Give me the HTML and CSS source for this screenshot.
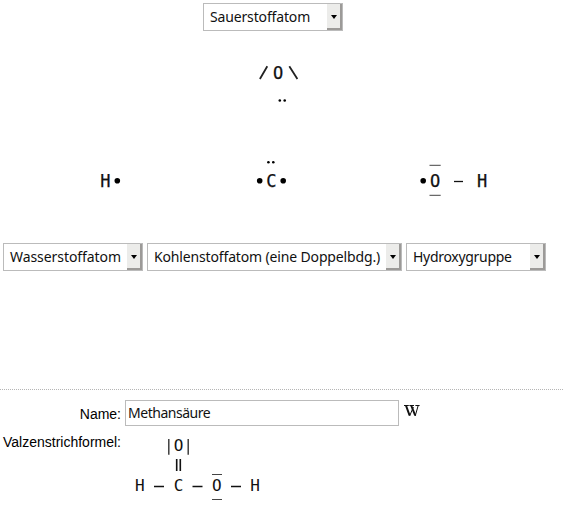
FILE: index.html
```
<!DOCTYPE html>
<html lang="de">
<head>
<meta charset="utf-8">
<title>Valenzstrichformel</title>
<link rel="stylesheet" href="styles.css">
</head>
<body>
<main class="builder">
  <div class="row-top"><div class="select oxygen"><span class="label">Sauerstoffatom</span><span class="arrow"></span></div></div>
  <svg class="atoms" width="563" height="212" viewBox="0 31 563 212">
    <g class="glyphs">
      <path class="stroke" d="M267.3 66.3L259.9 79M289.3 66.3L297.4 79"/>
      <text x="278" y="79">O</text>
      <text x="105.3" y="187">H</text>
      <text x="271.3" y="187">C</text>
      <text x="435" y="187">O</text>
      <text x="482" y="187">H</text>
    </g>
    <g class="dots">
      <circle cx="279.8" cy="100.5" r="1.3"/><circle cx="284.7" cy="100.5" r="1.3"/>
      <circle cx="268.4" cy="162.3" r="1.3"/><circle cx="273.3" cy="162.3" r="1.3"/>
      <circle cx="117.3" cy="180.7" r="2.8"/><circle cx="259.7" cy="180.7" r="2.8"/>
      <circle cx="283.2" cy="180.7" r="2.8"/><circle cx="423.2" cy="180.7" r="2.8"/>
    </g>
    <path class="pairs" d="M429.5 165.3H440.7M429.5 195.3H440.7"/>
    <path class="bond" d="M454 181.5H463"/>
  </svg>
  <div class="row">
    <div class="select hydrogen"><span class="label">Wasserstoffatom</span><span class="arrow"></span></div>
    <div class="select carbon"><span class="label">Kohlenstoffatom (eine Doppelbdg.)</span><span class="arrow"></span></div>
    <div class="select hydroxy"><span class="label">Hydroxygruppe</span><span class="arrow"></span></div>
  </div>
</main>
<section class="result">
  <div class="name-label">Name:</div>
  <div class="name-value">
    <div class="input">Methansäure</div>
    <svg class="wiki" width="16" height="14" viewBox="0 0 16 14">
      <path class="serif" d="M0 1.5H4.8M5.4 1.5H10M11.4 1.5H15.6"/>
      <path class="thick" d="M2 1.5L5.6 11.5M7.2 1.5L11.2 11.5"/>
      <path class="thin" d="M5.6 12L9.4 3M11.2 12L14.2 1.5"/>
    </svg>
  </div>
  <div class="formula-label">Valzenstrichformel:</div>
  <svg class="formula" width="160" height="76" viewBox="125 432 160 76">
    <g class="glyphs">
      <text x="178.5" y="451">O</text>
      <text x="139.8" y="491">H</text>
      <text x="178.5" y="491">C</text>
      <text x="216.8" y="491">O</text>
      <text x="255" y="491">H</text>
    </g>
    <path class="bars" d="M168.8 439V454.7M188.2 439V454.7"/>
    <path class="pairs" d="M212 474.5H222M212 499.5H222"/>
    <path class="double" d="M176.7 459V471M180.3 459V471"/>
    <path class="bond" d="M154 486.5H164M192.5 486.5H202.5M231 486.5H241"/>
  </svg>
</section>
</body>
</html>
```
FILE: styles.css
```
body {
  margin: 0;
  width: 563px;
  height: 517px;
  overflow: hidden;
  background: #fff;
  color: #111;
  font-family: "Noto Sans", sans-serif;
}
.builder {
  box-sizing: border-box;
  height: 389px;
  padding-top: 3px;
}
.row-top { padding-left: 203px; }
.row { display: flex; gap: 4px; padding-left: 3px; }
.select {
  box-sizing: border-box;
  display: flex;
  justify-content: space-between;
  height: 28px;
  border: 1px solid #bbb;
  padding-left: 6px;
  font-size: 14px;
  line-height: 26px;
  letter-spacing: -0.15px;
  white-space: nowrap;
}
.oxygen, .hydrogen, .hydroxy { width: 140px; }
.hydrogen { letter-spacing: -0.07px; }
.hydroxy { letter-spacing: -0.3px; }
.carbon { width: 255px; }
.arrow {
  box-sizing: border-box;
  display: flex;
  flex: none;
  align-items: center;
  justify-content: center;
  width: 15px;
  height: 26px;
  background: #ececea;
  border-right: 2px solid #9c9a98;
  border-bottom: 2px solid #9c9a98;
}
.arrow::after {
  content: "";
  margin-top: 2px;
  margin-left: 1px;
  border: 3.5px solid transparent;
  border-width: 4px 3.5px 0;
  border-top-color: #000;
}
.atoms, .formula { display: block; }
.glyphs {
  font: 16px "DejaVu Sans Mono", monospace;
  text-anchor: middle;
  fill: #111;
}
.atoms .glyphs { font-size: 17px; }
.atoms text { stroke: #111; stroke-width: 0.25; }
.stroke { stroke: #222; stroke-width: 1.8; fill: none; }
.pairs { stroke: #444; stroke-width: 1; fill: none; }
.bars { stroke: #333; stroke-width: 1.4; fill: none; }
.double { stroke: #111; stroke-width: 1.6; fill: none; }
.bond { stroke: #111; stroke-width: 1.3; fill: none; }
.result {
  display: grid;
  grid-template-columns: 121px 1fr;
  grid-template-rows: 26px 76px;
  column-gap: 4px;
  row-gap: 6px;
  box-sizing: border-box;
  height: 128px;
  padding-top: 10px;
  border-top: 1px dotted #b5b5b5;
}
.name-label, .formula-label {
  font: 14px/18px "Liberation Sans", sans-serif;
  text-align: right;
  color: #000;
}
.name-label { padding-top: 5px; }
.formula-label { padding-top: 1px; }
.name-value { display: flex; gap: 5px; }
.input {
  box-sizing: border-box;
  width: 274px;
  height: 26px;
  border: 1px solid #bbb;
  padding-left: 2px;
  font-size: 14px;
  line-height: 24px;
  letter-spacing: -0.48px;
}
.wiki { margin-top: 4px; fill: none; stroke: #111; }
.serif { stroke-width: 1; }
.thick { stroke-width: 2; }
.thin { stroke-width: 1; }
```
